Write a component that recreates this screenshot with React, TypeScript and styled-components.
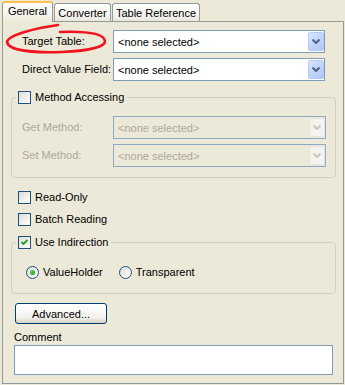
import React from "react";
import styled, { createGlobalStyle, css } from "styled-components";

const GlobalStyle = createGlobalStyle`
  html, body {
    margin: 0;
    padding: 0;
    background: #ece9d8;
  }
  body {
    font-family: "Liberation Sans", Arial, sans-serif;
    font-size: 11px;
    color: #000;
  }
`;

const Window = styled.div`
  position: relative;
  width: 345px;
  height: 385px;
  box-sizing: border-box;
  padding: 0 1px 1px 2px;
  background: #ece9d8;
  display: flex;
  flex-direction: column;
`;

const TabStrip = styled.div`
  position: relative;
  z-index: 1;
  display: flex;
  align-items: flex-end;
  gap: 1px;
  height: 21px;
`;

const Tab = styled.div<{ $w: number; $active?: boolean }>`
  box-sizing: border-box;
  width: ${(p) => p.$w}px;
  height: 18px;
  padding-top: 3px;
  line-height: 13px;
  text-align: center;
  border: 1px solid #919b9c;
  border-bottom: none;
  border-radius: 3px 3px 0 0;
  background: linear-gradient(#ffffff, #f3f2ec 70%, #e9e7dd);
  white-space: nowrap;

  ${(p) =>
    p.$active &&
    css`
      height: 21px;
      margin-bottom: -1px;
      padding-top: 2px;
      border-top: 2px solid #fcc14a;
      background: linear-gradient(#ffffff, #f6f4ec 60%, #ece9d8);
    `}
`;

const Panel = styled.div`
  flex: 1;
  box-sizing: border-box;
  border: 1px solid #919b9c;
  padding: 8px 7px 0 8px;
  display: flex;
  flex-direction: column;
`;

const FieldRow = styled.div<{ $top?: number; $inset?: boolean }>`
  display: grid;
  grid-template-columns: 91px 1fr;
  align-items: center;
  margin-top: ${(p) => p.$top ?? 0}px;
  padding: ${(p) => (p.$inset ? "0 11px" : "0")};
`;

const Label = styled.span<{ $disabled?: boolean }>`
  color: ${(p) => (p.$disabled ? "#aca899" : "#000")};
  line-height: 13px;
  white-space: nowrap;
`;

const Combo = styled.div<{ $disabled?: boolean }>`
  box-sizing: border-box;
  height: 23px;
  display: flex;
  align-items: stretch;
  padding: 1px 0;
  border: 1px solid ${(p) => (p.$disabled ? "#8fa8c8" : "#7f9db9")};
  background: ${(p) => (p.$disabled ? "transparent" : "#fff")};
  color: ${(p) => (p.$disabled ? "#aca899" : "#000")};
`;

const ComboText = styled.span`
  flex: 1;
  padding-left: 4px;
  display: flex;
  align-items: center;
  white-space: nowrap;
`;

const ArrowButton = styled.div<{ $disabled?: boolean }>`
  box-sizing: border-box;
  width: 16px;
  display: flex;
  align-items: center;
  justify-content: center;
  border-radius: 2px;
  border: 1px solid ${(p) => (p.$disabled ? "#e6e4dc" : "#b6c9f4")};
  background: ${(p) =>
    p.$disabled
      ? "#f4f3ee"
      : "linear-gradient(135deg, #dbe5fd, #c2d4fb 50%, #b1c6f5)"};
  color: ${(p) => (p.$disabled ? "#c9c7ba" : "#4d6185")};
`;

const Group = styled.fieldset<{ $top: number }>`
  margin: ${(p) => p.$top}px 0 0 0;
  padding: 0;
  min-width: 0;
  border: 1px solid #d0d0bf;
  border-radius: 4px;
`;

const GroupLegend = styled.legend`
  margin-left: 4px;
  padding: 0 3px 0 2px;
  display: flex;
  align-items: center;
  gap: 4px;
  line-height: 13px;
`;

const GroupBody = styled.div<{ $pad: string }>`
  padding: ${(p) => p.$pad};
  display: flex;
  flex-direction: column;
`;

const CheckRow = styled.label<{ $top?: number }>`
  display: flex;
  align-items: center;
  gap: 4px;
  margin-top: ${(p) => p.$top ?? 0}px;
  padding-left: 7px;
  line-height: 13px;
`;

const Box = styled.span`
  box-sizing: border-box;
  width: 13px;
  height: 13px;
  flex: none;
  border: 1px solid #1c5180;
  background: linear-gradient(135deg, #dcdcd7, #f6f6f4 75%, #ffffff);
  display: flex;
  align-items: center;
  justify-content: center;
`;

const RadioRow = styled.div`
  display: flex;
  align-items: center;
  gap: 16px;
`;

const RadioItem = styled.label`
  display: flex;
  align-items: center;
  gap: 4px;
  line-height: 13px;
`;

const RadioCircle = styled.span`
  box-sizing: border-box;
  width: 13px;
  height: 13px;
  flex: none;
  border-radius: 50%;
  border: 1px solid #1c5180;
  background: linear-gradient(135deg, #dcdcd7, #f8f8f6 75%, #ffffff);
  display: flex;
  align-items: center;
  justify-content: center;
`;

const RadioDot = styled.span`
  width: 5px;
  height: 5px;
  border-radius: 50%;
  background: radial-gradient(circle at 35% 35%, #5ed15e, #21a121 70%);
`;

const Button = styled.button`
  box-sizing: border-box;
  width: 92px;
  height: 21px;
  margin: 9px 0 0 4px;
  padding: 0;
  font: inherit;
  color: #000;
  border: 1px solid #003c74;
  border-radius: 3px;
  background: linear-gradient(#ffffff, #f3f2ec 70%, #d6d0c5);
`;

const CommentLabel = styled.span`
  margin: 7px 0 0 3px;
  line-height: 13px;
`;

const CommentBox = styled.div`
  box-sizing: border-box;
  height: 30px;
  margin: 1px 3px 0 3px;
  border: 1px solid #7f9db9;
  background: #fff;
`;

const Annotation = styled.svg`
  position: absolute;
  left: 0;
  top: 0;
  pointer-events: none;
`;

const Chevron: React.FC = () => (
  <svg width="8" height="5" viewBox="0 0 8 5">
    <path d="M0.5 0.5 L4 4 L7.5 0.5" fill="none" stroke="currentColor" strokeWidth="2" />
  </svg>
);

const ComboBox: React.FC<{ disabled?: boolean }> = ({ disabled }) => (
  <Combo $disabled={disabled}>
    <ComboText>&lt;none selected&gt;</ComboText>
    <ArrowButton $disabled={disabled}>
      <Chevron />
    </ArrowButton>
  </Combo>
);

const CheckBox: React.FC<{ checked?: boolean }> = ({ checked }) => (
  <Box>
    {checked && (
      <svg width="7" height="7" viewBox="0 0 7 7">
        <path d="M0.5 3 L2.5 5 L6.5 1" fill="none" stroke="#21a121" strokeWidth="1.8" />
      </svg>
    )}
  </Box>
);

const App: React.FC = () => {
  return (
    <Window>
      <GlobalStyle />
      <TabStrip>
        <Tab $w={51} $active>
          General
        </Tab>
        <Tab $w={57}>Converter</Tab>
        <Tab $w={88}>Table Reference</Tab>
      </TabStrip>
      <Panel>
        <FieldRow $inset>
          <Label>Target Table:</Label>
          <ComboBox />
        </FieldRow>
        <FieldRow $inset $top={5}>
          <Label>Direct Value Field:</Label>
          <ComboBox />
        </FieldRow>

        <Group $top={10}>
          <GroupLegend>
            <CheckBox />
            Method Accessing
          </GroupLegend>
          <GroupBody $pad="12px 9px 10px 10px">
            <FieldRow>
              <Label $disabled>Get Method:</Label>
              <ComboBox disabled />
            </FieldRow>
            <FieldRow $top={5}>
              <Label $disabled>Set Method:</Label>
              <ComboBox disabled />
            </FieldRow>
          </GroupBody>
        </Group>

        <CheckRow $top={13}>
          <CheckBox />
          Read-Only
        </CheckRow>
        <CheckRow $top={9}>
          <CheckBox />
          Batch Reading
        </CheckRow>

        <Group $top={10}>
          <GroupLegend>
            <CheckBox checked />
            Use Indirection
          </GroupLegend>
          <GroupBody $pad="17px 10px 14px 14px">
            <RadioRow>
              <RadioItem>
                <RadioCircle>
                  <RadioDot />
                </RadioCircle>
                ValueHolder
              </RadioItem>
              <RadioItem>
                <RadioCircle />
                Transparent
              </RadioItem>
            </RadioRow>
          </GroupBody>
        </Group>

        <div>
          <Button>Advanced...</Button>
        </div>
        <CommentLabel>Comment</CommentLabel>
        <CommentBox />
      </Panel>

      <Annotation width="345" height="385" viewBox="0 0 345 385">
        <path
          d="M58 25 C36 28 8 35 7 42 C8 50 30 53 62 52 C88 51 105 47 105 41 C104 34 88 31 60 32"
          fill="none"
          stroke="#f0141e"
          strokeWidth="2.6"
          strokeLinecap="round"
        />
      </Annotation>
    </Window>
  );
};

export default App;
